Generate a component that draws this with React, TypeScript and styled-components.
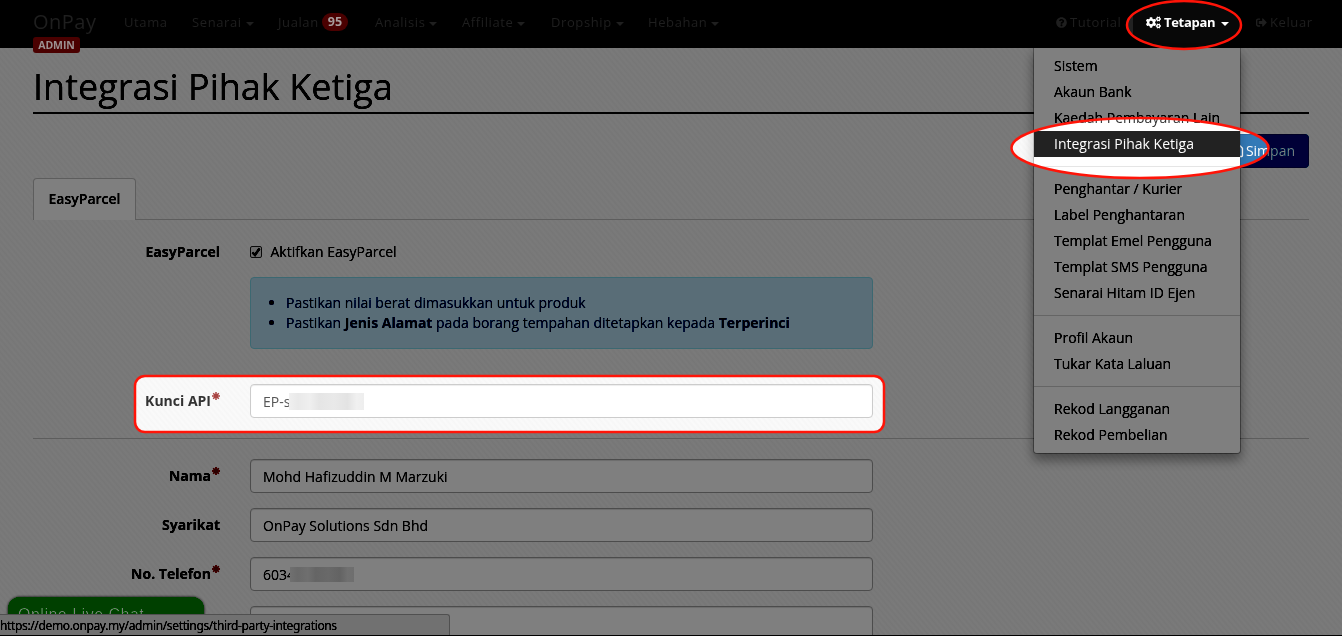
import React from "react";
import styled, { createGlobalStyle, css } from "styled-components";
import { FaCogs, FaQuestionCircle, FaSignOutAlt, FaRegSave } from "react-icons/fa";

const GlobalStyle = createGlobalStyle`
  * { box-sizing: border-box; }
  body {
    margin: 0;
    overflow: hidden;
    font: 14px/20px "Open Sans", "Liberation Sans", sans-serif;
    color: #333;
    background: #f9f9f9;
  }
`;

const Page = styled.div`
  position: relative;
  isolation: isolate;
  width: 1342px;
  height: 636px;
  overflow: hidden;
  background:
    repeating-linear-gradient(50deg, rgba(255, 255, 255, 0.35) 0, rgba(243, 243, 243, 0.35) 2.1px, rgba(255, 255, 255, 0.35) 4.2px),
    #f8f8f8;
`;

const Navbar = styled.nav`
  display: flex;
  justify-content: space-between;
  height: 48px;
  padding: 0 17px 0 33px;
  background: #222;
  border-bottom: 1px solid #080808;
`;

const NavGroup = styled.div`
  display: flex;
`;

const Brand = styled.div`
  position: relative;
  z-index: 7;
  width: 76px;
  padding-top: 11px;
  font-size: 20px;
  line-height: 22px;
  letter-spacing: 0.5px;
  color: #1f1f1f;
`;

const AdminTag = styled.span`
  position: absolute;
  left: 0;
  top: 37px;
  width: 47px;
  height: 16px;
  border-radius: 3px;
  background: #4a0000;
  color: #9c9090;
  font-size: 10.5px;
  font-weight: 700;
  line-height: 17px;
  letter-spacing: -0.1px;
  text-align: center;
`;

const NavItem = styled.div<{ $w: number; $active?: boolean }>`
  position: relative;
  display: flex;
  align-items: center;
  width: ${(p) => p.$w}px;
  height: 48px;
  padding: 0 0 4px 15px;
  font-size: 13px;
  letter-spacing: 0.6px;
  white-space: nowrap;
  svg { margin-right: 3px; }
  ${(p) =>
    p.$active
      ? css`
          padding-left: 13px;
          background: #080808;
          color: #fff;
          font-weight: 700;
          letter-spacing: -0.3px;
        `
      : css`
          z-index: 7;
          color: #1f1f1f;
        `}
`;

const Caret = styled.span`
  margin: 3px 0 0 4px;
  border: 4px solid transparent;
  border-top-color: currentColor;
  border-bottom: 0;
`;

const ActiveCaret = styled(Caret)`
  margin-left: 6px;
`;

const Count = styled.span`
  margin-left: 3px;
  padding: 0 6px;
  border-radius: 10px;
  background: #4a0000;
  color: #a89c9c;
  font-size: 12.5px;
  font-weight: 700;
  line-height: 18px;
  letter-spacing: 0;
`;

const Menu = styled.div`
  position: absolute;
  z-index: 2;
  top: 48px;
  left: -100px;
  width: 208px;
  height: 406px;
  padding: 5px 0;
  border: 1px solid rgba(0, 0, 0, 0.15);
  border-top: 0;
  border-radius: 0 0 4px 4px;
  background: #fff;
  background-clip: padding-box;
  box-shadow: 0 6px 12px rgba(0, 0, 0, 0.2);
  font-size: 14px;
  font-weight: 400;
  letter-spacing: 0;
  color: #333;
`;

const MenuItem = styled.div<{ $active?: boolean }>`
  height: 26px;
  padding: 3px 20px;
  background: ${(p) => (p.$active ? "#222" : "transparent")};
  color: ${(p) => (p.$active ? "#fff" : "#333")};
`;

const Divider = styled.div`
  height: 1px;
  margin: 9px 0;
  background: #e5e5e5;
`;

const Content = styled.main`
  padding: 0 33px;
`;

const Title = styled.h1`
  height: 66px;
  margin: 0;
  padding-top: 19px;
  border-bottom: 2px solid #222;
  font-size: 36px;
  font-weight: 400;
  line-height: 40px;
`;

const Actions = styled.div`
  display: flex;
  justify-content: flex-end;
  padding-top: 20px;
`;

const SaveButton = styled.div`
  display: flex;
  align-items: center;
  gap: 2px;
  height: 34px;
  padding: 0 13px;
  border: 1px solid #2e6da4;
  border-radius: 4px;
  background: #337ab7;
  color: #fff;
`;

const Tabs = styled.div`
  display: flex;
  height: 42px;
  margin-top: 10px;
  border-bottom: 1px solid #ddd;
`;

const Tab = styled.div`
  width: 103px;
  height: 42px;
  border: 1px solid #ddd;
  border-bottom: 0;
  border-radius: 4px 4px 0 0;
  background: #fff;
  font-weight: 600;
  line-height: 40px;
  text-align: center;
`;

const Row = styled.div<{ $gap: number }>`
  display: grid;
  grid-template-columns: 187px 623px;
  column-gap: 30px;
  margin-top: ${(p) => p.$gap}px;
`;

const Label = styled.div<{ $top?: number }>`
  display: flex;
  justify-content: flex-end;
  padding-top: ${(p) => p.$top ?? 7}px;
  font-weight: 700;
`;

const Star = styled.span`
  margin-left: 1px;
  color: #a94442;
  svg { display: block; margin-top: 1px; }
`;

const CheckLine = styled.div`
  display: flex;
  align-items: center;
  height: 20px;
  gap: 8.5px;
`;

const CheckBox = styled.span`
  display: flex;
  width: 12px;
  height: 12px;
  border: 1px solid #8a8a8a;
  border-radius: 2px;
  background: #ececec;
`;

const Notice = styled.div`
  grid-column: 2;
  height: 72px;
  padding: 15px;
  border: 1px solid #bce8f1;
  border-radius: 4px;
  background: #d9edf7;
  color: #2a4a80;
  ul { margin: 0; padding-left: 20px; }
`;

const Input = styled.div`
  display: flex;
  align-items: center;
  height: 34px;
  padding: 1px 12px 0;
  border: 1px solid #ccc;
  border-radius: 4px;
  background: #fff;
  box-shadow: inset 0 1px 1px rgba(0, 0, 0, 0.075);
  color: #555;
`;

const Redaction = styled.span<{ $w: number; $h: number; $over: number }>`
  width: ${(p) => p.$w}px;
  height: ${(p) => p.$h}px;
  margin-left: -${(p) => p.$over}px;
  background: linear-gradient(90deg, #f0f0f0, #e9e9e9 12%, #efefef 28%, #e5e5e5 40%, #e9e9e9 60%, #e3e3e3 78%, #f0f0f0 90%, #eee);
`;

const Rule = styled.div`
  height: 1px;
  margin-top: 20px;
  background: #ddd;
`;

const Chat = styled.div`
  position: absolute;
  left: 8px;
  top: 597px;
  width: 196px;
  height: 40px;
  padding: 8px 10px;
  border-radius: 12px 12px 0 0;
  background: #00c000;
  box-shadow: 0 0 2px 1px rgba(0, 0, 0, 0.25);
  color: #fff;
  font: 16px/20px "Liberation Sans", sans-serif;
  letter-spacing: 0.5px;
`;

const StatusBar = styled.div`
  position: absolute;
  left: 0;
  top: 614px;
  width: 450px;
  height: 21px;
  border: 1px solid #d0d0d0;
  border-left: 0;
  border-bottom: 0;
  border-radius: 0 3px 0 0;
  background: #f1f1f1;
  color: #333;
  font: 12px/21px "Noto Sans", sans-serif;
  letter-spacing: -0.36px;
`;

const BottomEdge = styled.div`
  position: absolute;
  left: 0;
  right: 0;
  bottom: 0;
  height: 1px;
  background: #000;
`;

/* The spotlight shade subtracts a fixed grey: invert, add, invert back. */
const Shade = styled.div<{ $mode: string; $color: string }>`
  position: absolute;
  z-index: 5;
  inset: 0;
  background: ${(p) => p.$color};
  mix-blend-mode: ${(p) => p.$mode};
  clip-path: path(evenodd, "M0 0H1342V636H0Z M1127 25a57 24 0 1 0 114 0a57 24 0 1 0 -114 0Z M1011.500 148a128.500 30 0 1 0 257 0a128.500 30 0 1 0 -257 0Z M145 376H874Q884 376 884 386V422Q884 432 874 432H145Q135 432 135 422V386Q135 376 145 376Z");
`;

const Rings = styled.svg`
  position: absolute;
  z-index: 6;
  inset: 0;
`;

const Required = () => (
  <Star>
    <svg width="8" height="8" viewBox="0 0 8 8" stroke="currentColor" strokeWidth="1.500">
      <path d="M4 0V8M0 4H8M1.200 1.200L6.800 6.800M6.800 1.200L1.200 6.800" />
    </svg>
  </Star>
);

const menu = [
  ["Sistem", "Akaun Bank", "Kaedah Pembayaran Lain", "Integrasi Pihak Ketiga"],
  ["Penghantar / Kurier", "Label Penghantaran", "Templat Emel Pengguna", "Templat SMS Pengguna", "Senarai Hitam ID Ejen"],
  ["Profil Akaun", "Tukar Kata Laluan"],
  ["Rekod Langganan", "Rekod Pembelian"],
];

export default function App() {
  return (
    <>
      <GlobalStyle />
      <Page>
        <Navbar>
          <NavGroup>
            <Brand>OnPay<AdminTag>ADMIN</AdminTag></Brand>
            <NavItem $w={68}>Utama</NavItem>
            <NavItem $w={86}>Senarai<Caret /></NavItem>
            <NavItem $w={97}>Jualan<Count>95</Count></NavItem>
            <NavItem $w={87}>Analisis<Caret /></NavItem>
            <NavItem $w={89}>Affiliate<Caret /></NavItem>
            <NavItem $w={97}>Dropship<Caret /></NavItem>
            <NavItem $w={100}>Hebahan<Caret /></NavItem>
          </NavGroup>
          <NavGroup>
            <NavItem $w={92}><FaQuestionCircle size={11} />Tutorial</NavItem>
            <NavItem $w={108} $active>
              <FaCogs size={15} />Tetapan<ActiveCaret />
              <Menu>
                {menu.map((group, i) => (
                  <React.Fragment key={i}>
                    {i > 0 && <Divider />}
                    {group.map((item) => (
                      <MenuItem key={item} $active={item === "Integrasi Pihak Ketiga"}>{item}</MenuItem>
                    ))}
                  </React.Fragment>
                ))}
              </Menu>
            </NavItem>
            <NavItem $w={84}><FaSignOutAlt size={11} />Keluar</NavItem>
          </NavGroup>
        </Navbar>
        <Content>
          <Title>Integrasi Pihak Ketiga</Title>
          <Actions><SaveButton><FaRegSave size={14} />Simpan</SaveButton></Actions>
          <Tabs><Tab>EasyParcel</Tab></Tabs>
          <Row $gap={22}>
            <Label $top={0}>EasyParcel</Label>
            <CheckLine>
              <CheckBox>
                <svg width="10" height="10" viewBox="0 0 10 10" fill="none" stroke="#222" strokeWidth="2.200"><path d="M1.500 5.500L4 8L8.500 1.500" /></svg>
              </CheckBox>
              Aktifkan EasyParcel
            </CheckLine>
          </Row>
          <Row $gap={15}>
            <Notice>
              <ul>
                <li>Pastikan nilai berat dimasukkan untuk produk</li>
                <li>Pastikan <b>Jenis Alamat</b> pada borang tempahan ditetapkan kepada <b>Terperinci</b></li>
              </ul>
            </Notice>
          </Row>
          <Row $gap={35}>
            <Label>Kunci API<Required /></Label>
            <Input>EP-s<Redaction $w={75} $h={17} $over={1.5} /></Input>
          </Row>
          <Rule />
          <Row $gap={20}>
            <Label>Nama<Required /></Label>
            <Input>Mohd Hafizuddin M Marzuki</Input>
          </Row>
          <Row $gap={15}>
            <Label>Syarikat</Label>
            <Input>OnPay Solutions Sdn Bhd</Input>
          </Row>
          <Row $gap={15}>
            <Label>No. Telefon<Required /></Label>
            <Input>6034<Redaction $w={64} $h={15} $over={5} /></Input>
          </Row>
          <Row $gap={15}>
            <Label />
            <Input />
          </Row>
        </Content>
        <Chat>Online Live Chat</Chat>
        <StatusBar>https://demo.onpay.my/admin/settings/third-party-integrations</StatusBar>
        <Shade $mode="difference" $color="#fff" />
        <Shade $mode="plus-lighter" $color="#808080" />
        <Shade $mode="difference" $color="#fff" />
        <Rings width="1342" height="636" fill="none" stroke="#ff1408" strokeWidth="2.500">
          <ellipse cx="1184" cy="25" rx="57" ry="24" />
          <ellipse cx="1140" cy="148" rx="128.500" ry="30" />
          <rect x="135" y="376" width="749" height="56" rx="10" />
        </Rings>
        <BottomEdge />
      </Page>
    </>
  );
}
